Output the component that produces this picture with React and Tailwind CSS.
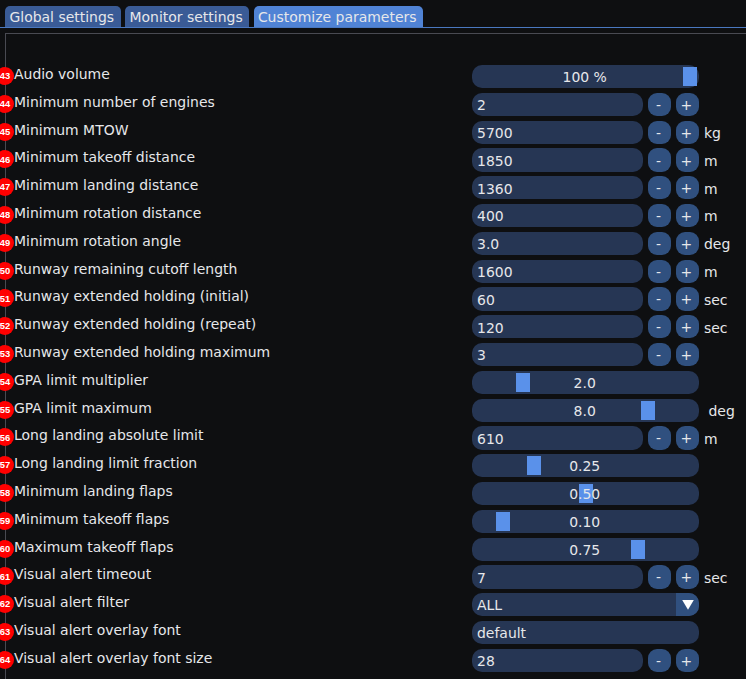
import React from "react";

const ROWS = [
  { n: 43, label: "Audio volume", type: "slider", value: "100 %", at: 211 },
  { n: 44, label: "Minimum number of engines", value: "2" },
  { n: 45, label: "Minimum MTOW", value: "5700", unit: "kg" },
  { n: 46, label: "Minimum takeoff distance", value: "1850", unit: "m" },
  { n: 47, label: "Minimum landing distance", value: "1360", unit: "m" },
  { n: 48, label: "Minimum rotation distance", value: "400", unit: "m" },
  { n: 49, label: "Minimum rotation angle", value: "3.0", unit: "deg" },
  { n: 50, label: "Runway remaining cutoff length", value: "1600", unit: "m" },
  { n: 51, label: "Runway extended holding (initial)", value: "60", unit: "sec" },
  { n: 52, label: "Runway extended holding (repeat)", value: "120", unit: "sec" },
  { n: 53, label: "Runway extended holding maximum", value: "3" },
  { n: 54, label: "GPA limit multiplier", type: "slider", value: "2.0", at: 44 },
  { n: 55, label: "GPA limit maximum", type: "slider", value: "8.0", at: 169, unit: "deg" },
  { n: 56, label: "Long landing absolute limit", value: "610", unit: "m" },
  { n: 57, label: "Long landing limit fraction", type: "slider", value: "0.25", at: 54.5 },
  { n: 58, label: "Minimum landing flaps", type: "slider", value: "0.50", at: 107 },
  { n: 59, label: "Minimum takeoff flaps", type: "slider", value: "0.10", at: 23.5 },
  { n: 60, label: "Maximum takeoff flaps", type: "slider", value: "0.75", at: 158.7 },
  { n: 61, label: "Visual alert timeout", value: "7", unit: "sec" },
  { n: 62, label: "Visual alert filter", type: "select", value: "ALL" },
  { n: 63, label: "Visual alert overlay font", type: "text", value: "default" },
  { n: 64, label: "Visual alert overlay font size", value: "28" },
];

const TABS = [
  { label: "Global settings", box: "w-[115.5px] bg-[#3a5b96]" },
  { label: "Monitor settings", box: "w-[124px] bg-[#3a5b96]" },
  { label: "Customize parameters", box: "w-[169px] bg-[#5083d5]" },
];

function StepButton({ sign }) {
  return (
    <button className="flex h-[23.2px] w-[23.2px] items-center justify-center rounded-[9px] bg-[#30507f] pt-[3px] pr-[2px] leading-none">
      {sign}
    </button>
  );
}

function Control({ row }) {
  if (row.type === "slider") {
    return (
      <div className="relative flex h-[23.2px] w-[227px] items-center justify-center rounded-[10px] bg-[#263654] pt-[2.4px] pr-[1.6px]">
        <div
          className="absolute top-[2px] h-[19px] w-[14px] bg-[#5a91ea]"
          style={{ left: row.at }}
        />
        <span className="relative">{row.value}</span>
      </div>
    );
  }
  if (row.type === "select") {
    return (
      <div className="flex h-[23.2px] w-[227px] overflow-hidden rounded-[10px] bg-[#263654]">
        <span className="flex-1 pt-[2px] pl-[5px]">{row.value}</span>
        <span className="flex w-[23px] items-center justify-center bg-[#30507f]">
          <svg width="12" height="10" viewBox="0 0 12 10" fill="#fff">
            <path d="M0.2 0H11.8L6 9.8Z" />
          </svg>
        </span>
      </div>
    );
  }
  if (row.type === "text") {
    return (
      <div className="h-[23.2px] w-[227px] rounded-[10px] bg-[#263654] pt-[2px] pl-[5px]">
        {row.value}
      </div>
    );
  }
  return (
    <div className="flex w-[227px] justify-between">
      <div className="h-[23.2px] w-[171.3px] rounded-[10px] bg-[#263654] pt-[2.4px] pl-[5px]">
        {row.value}
      </div>
      <div className="flex gap-[4.6px]">
        <StepButton sign="-" />
        <StepButton sign="+" />
      </div>
    </div>
  );
}

export default function App() {
  return (
    <div className="flex h-[679px] w-[746px] flex-col overflow-hidden bg-[#0e0f11] font-['DejaVu_Sans',sans-serif] text-[13.96px] leading-[21.2px] text-[#e6e7ea]">
      <div className="flex h-[28px] shrink-0 items-end gap-[4.6px] border-b border-solid border-b-[#4a78c0] pl-[5px]">
        {TABS.map((tab) => (
          <div
            key={tab.label}
            className={`flex h-[21px] items-center justify-center rounded-t-[5px] pt-[1.5px] pr-[2px] whitespace-nowrap ${tab.box}`}
          >
            {tab.label}
          </div>
        ))}
      </div>
      <div className="mt-[5px] ml-[5px] flex-1 border-t border-l border-[#494a52] pt-[31px]">
        {ROWS.map((row) => (
          <div key={row.n} className="relative flex h-[27.8px] whitespace-nowrap">
            <span className="absolute top-[2px] left-[-10px] flex h-[18px] w-[18px] items-center justify-center rounded-full bg-[#ff0000] font-['Liberation_Sans',sans-serif] text-[9.4px] leading-none font-bold text-white">
              {row.n}
            </span>
            <span className="relative -mt-px w-[466px] pl-[8px]">{row.label}</span>
            <Control row={row} />
            {row.unit && (
              <span className={row.type === "slider" ? "pt-[2.4px] pl-[9.5px]" : "pt-[2.4px] pl-[5px]"}>
                {row.unit}
              </span>
            )}
          </div>
        ))}
      </div>
    </div>
  );
}
